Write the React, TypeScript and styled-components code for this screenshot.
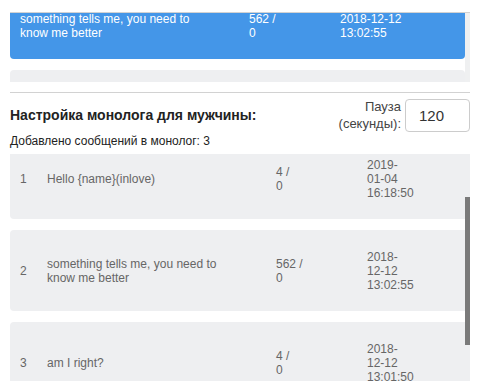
import * as React from 'react';
import styled, { createGlobalStyle } from 'styled-components';

// TYPES
interface Message {
  id: number;
  text: string;
  sent: number;
  failed: number;
  date: string;
}

const messages: Message[] = [
  { id: 1, text: 'Hello {name}(inlove)', sent: 4, failed: 0, date: '2019-01-04 16:18:50' },
  {
    id: 2,
    text: 'something tells me, you need to know me better',
    sent: 562,
    failed: 0,
    date: '2018-12-12 13:02:55',
  },
  { id: 3, text: 'am I right?', sent: 4, failed: 0, date: '2018-12-12 13:01:50' },
];

const Counter: React.FC<{ sent: number; failed: number }> = ({ sent, failed }) => (
  <Count>
    <span>{sent} /</span>
    <span>{failed}</span>
  </Count>
);

const App: React.FC = () => (
  <>
    <GlobalStyle />
    <Page>
      <TopList>
        <TopScroll>
          <TopInner>
            <Row $active $cols="229px 91px 1fr">
              <Text>something tells me, you need to know me better</Text>
              <Counter sent={562} failed={0} />
              <TopDate>2018-12-12 13:02:55</TopDate>
            </Row>
            <Row $cols="229px 91px 1fr">
              <Text>I never said</Text>
              <Counter sent={3} failed={0} />
              <TopDate>2018-12-12 13:01:10</TopDate>
            </Row>
          </TopInner>
        </TopScroll>
        <Track />
      </TopList>

      <Section>
        <HeadRow>
          <Title>Настройка монолога для мужчины:</Title>
          <Pause>
            <PauseLabel>
              Пауза
              <br />
              (секунды):
            </PauseLabel>
            <Input defaultValue="120" />
          </Pause>
        </HeadRow>
        <Added>Добавлено сообщений в монолог: 3</Added>

        <List>
          <ListInner>
            {messages.map((m) => (
              <Row key={m.id} $cols="27px 229px 91px 1fr">
                <span>{m.id}</span>
                <Text>{m.text}</Text>
                <Counter sent={m.sent} failed={m.failed} />
                <Date>{m.date}</Date>
              </Row>
            ))}
          </ListInner>
          <Thumb />
        </List>
      </Section>
    </Page>
  </>
);

export default App;

const GlobalStyle = createGlobalStyle`
  html, body {
    margin: 0;
    padding: 0;
    overflow: hidden;
    background: #fff;
  }
  body {
    font-family: "Liberation Sans", Arial, sans-serif;
  }
`;

const Page = styled.div`
  width: 460px;
  padding: 12px 8px 0 10px;
`;

const TopList = styled.div`
  display: flex;
  height: 69px;
  border-top: 1px solid #d2d2d2;
  overflow: hidden;
`;

const TopScroll = styled.div`
  flex: 1;
  overflow: hidden;
`;

const TopInner = styled.div`
  display: flex;
  flex-direction: column;
  gap: 11px;
  margin-top: -21px;
`;

const Track = styled.div`
  width: 5px;
  background: #eff0f1;
`;

const Row = styled.div<{ $active?: boolean; $cols: string }>`
  display: grid;
  grid-template-columns: ${({ $cols }) => $cols};
  align-items: center;
  padding: 20px 0 19px 10px;
  border-radius: 4px;
  background: ${({ $active }) => ($active ? '#4496e8' : '#eeeff1')};
  color: ${({ $active }) => ($active ? '#fff' : '#666')};
  font-size: 12px;
  line-height: 14px;
`;

const Text = styled.span`
  max-width: 180px;
`;

const Count = styled.span`
  display: flex;
  flex-direction: column;
`;

const Date = styled.span`
  width: min-content;
`;

const TopDate = styled.span`
  width: 80px;
`;

const Section = styled.div`
  margin-top: 10px;
  padding-top: 5px;
  border-top: 1px solid #d2d2d2;
`;

const HeadRow = styled.div`
  display: flex;
  justify-content: space-between;
  align-items: center;
`;

const Title = styled.h3`
  margin: 0;
  font-size: 14px;
  font-weight: bold;
  color: #222;
`;

const Pause = styled.div`
  display: flex;
  align-items: center;
  gap: 4px;
`;

const PauseLabel = styled.div`
  text-align: right;
  font-size: 13px;
  line-height: 17px;
  color: #444;
`;

const Input = styled.input`
  box-sizing: border-box;
  width: 65px;
  height: 33px;
  padding: 0 0 0 13px;
  border: 1px solid #ccc;
  border-radius: 4px;
  font-family: inherit;
  font-size: 15px;
  color: #333;
  outline: none;
`;

const Added = styled.div`
  margin-top: 2px;
  font-size: 12px;
  line-height: 14px;
  color: #222;
`;

const List = styled.div`
  position: relative;
  height: 227px;
  margin-top: 6px;
  overflow: hidden;
`;

const ListInner = styled.div`
  display: flex;
  flex-direction: column;
  gap: 11px;
  margin-top: -16px;
`;

const Thumb = styled.div`
  position: absolute;
  top: 43px;
  right: 0;
  width: 5px;
  height: 148px;
  background: #7a7a7a;
`;
